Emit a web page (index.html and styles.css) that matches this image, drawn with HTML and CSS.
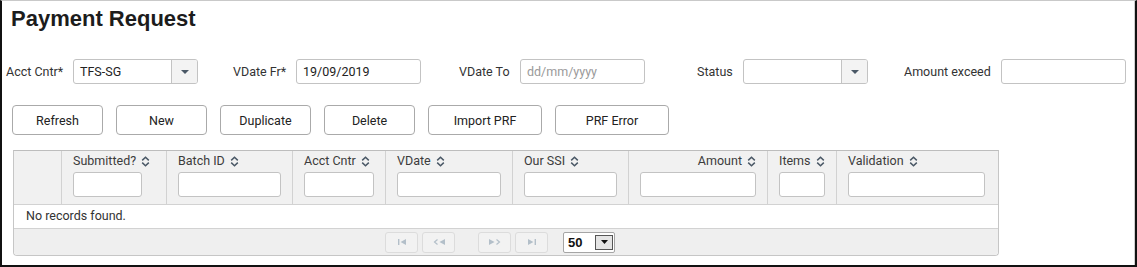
FILE: index.html
```html
<!DOCTYPE html>
<html lang="en">

<head>
  <meta charset="UTF-8" />
  <title>Payment Request</title>
  <link rel="stylesheet" href="styles.css">
</head>

<body>
  <div class="frame">
    <h1 class="page-title">Payment Request</h1>

    <!-- filter row -->
    <div class="filters">
      <label class="lbl lbl-acct">Acct Cntr*</label>
      <div class="dropdown">
        <span class="dd-value">TFS-SG</span>
        <span class="dd-trigger"><svg width="8" height="4" viewBox="0 0 8 4"><polygon points="0,0 8,0 4,4" /></svg></span>
      </div>

      <label class="lbl lbl-from">VDate Fr*</label>
      <input class="field" type="text" value="19/09/2019" />

      <label class="lbl lbl-to">VDate To</label>
      <input class="field" type="text" placeholder="dd/mm/yyyy" />

      <label class="lbl lbl-status">Status</label>
      <div class="dropdown">
        <span class="dd-value"></span>
        <span class="dd-trigger"><svg width="8" height="4" viewBox="0 0 8 4"><polygon points="0,0 8,0 4,4" /></svg></span>
      </div>

      <label class="lbl lbl-amount">Amount exceed</label>
      <input class="field" type="text" />
    </div>

    <!-- actions -->
    <div class="toolbar">
      <button class="btn">Refresh</button>
      <button class="btn">New</button>
      <button class="btn">Duplicate</button>
      <button class="btn">Delete</button>
      <button class="btn btn-wide">Import PRF</button>
      <button class="btn btn-wide">PRF Error</button>
    </div>

    <!-- results table -->
    <div class="datatable">
      <div class="dt-head">
        <div class="th"></div>
        <div class="th">
          <div class="th-label">Submitted? <svg class="sort" width="9" height="11" viewBox="0 0 9 11"><path d="M1.2 4.4L4.5 1.3L7.8 4.4M1.2 6.6L4.5 9.7L7.8 6.6" /></svg></div>
          <input class="filter-in in-narrow" type="text" />
        </div>
        <div class="th">
          <div class="th-label">Batch ID <svg class="sort" width="9" height="11" viewBox="0 0 9 11"><path d="M1.2 4.4L4.5 1.3L7.8 4.4M1.2 6.6L4.5 9.7L7.8 6.6" /></svg></div>
          <input class="filter-in" type="text" />
        </div>
        <div class="th">
          <div class="th-label">Acct Cntr <svg class="sort" width="9" height="11" viewBox="0 0 9 11"><path d="M1.2 4.4L4.5 1.3L7.8 4.4M1.2 6.6L4.5 9.7L7.8 6.6" /></svg></div>
          <input class="filter-in" type="text" />
        </div>
        <div class="th">
          <div class="th-label">VDate <svg class="sort" width="9" height="11" viewBox="0 0 9 11"><path d="M1.2 4.4L4.5 1.3L7.8 4.4M1.2 6.6L4.5 9.7L7.8 6.6" /></svg></div>
          <input class="filter-in" type="text" />
        </div>
        <div class="th">
          <div class="th-label">Our SSI <svg class="sort" width="9" height="11" viewBox="0 0 9 11"><path d="M1.2 4.4L4.5 1.3L7.8 4.4M1.2 6.6L4.5 9.7L7.8 6.6" /></svg></div>
          <input class="filter-in" type="text" />
        </div>
        <div class="th">
          <div class="th-label th-right">Amount <svg class="sort" width="9" height="11" viewBox="0 0 9 11"><path d="M1.2 4.4L4.5 1.3L7.8 4.4M1.2 6.6L4.5 9.7L7.8 6.6" /></svg></div>
          <input class="filter-in" type="text" />
        </div>
        <div class="th">
          <div class="th-label">Items <svg class="sort" width="9" height="11" viewBox="0 0 9 11"><path d="M1.2 4.4L4.5 1.3L7.8 4.4M1.2 6.6L4.5 9.7L7.8 6.6" /></svg></div>
          <input class="filter-in" type="text" />
        </div>
        <div class="th">
          <div class="th-label">Validation <svg class="sort" width="9" height="11" viewBox="0 0 9 11"><path d="M1.2 4.4L4.5 1.3L7.8 4.4M1.2 6.6L4.5 9.7L7.8 6.6" /></svg></div>
          <input class="filter-in" type="text" />
        </div>
      </div>

      <div class="dt-empty">No records found.</div>

      <div class="paginator">
        <span class="pg-btn"><svg width="8" height="6" viewBox="0 0 8 6"><rect x="0" y="0" width="1.4" height="6" /><polygon points="8,0 8,6 2.6,3" /></svg></span>
        <span class="pg-btn"><svg width="12" height="6" viewBox="0 0 12 6"><polyline points="4.5,0.5 1.5,3 4.5,5.5" /><polygon points="12,0 12,6 6.5,3" /></svg></span>
        <span class="pg-btn pg-next"><svg width="12" height="6" viewBox="0 0 12 6"><polygon points="0,0 0,6 5.5,3" /><polyline points="7.5,0.5 10.5,3 7.5,5.5" /></svg></span>
        <span class="pg-btn"><svg width="8" height="6" viewBox="0 0 8 6"><polygon points="0,0 0,6 5.4,3" /><rect x="6.6" y="0" width="1.4" height="6" /></svg></span>
        <span class="rows-select">
          <span class="rows-value">50</span>
          <span class="rows-trigger"><svg width="7" height="4" viewBox="0 0 7 4"><polygon points="0,0 7,0 3.5,4" /></svg></span>
        </span>
      </div>
    </div>
  </div>
</body>

</html>
```

FILE: styles.css
```css
/* Payment request screen */
:root {
  --text: #2b2b2b;
  --line: #c6c6c6;
  --line-soft: #d2d2d2;
  --head: #f1f1f1;
  --input-border: #c3c3c3;
  --icon: #4a5866;
}
* {
  box-sizing: border-box;
  margin: 0;
  padding: 0;
}
body {
  background: #fff;
  color: var(--text);
  font-family: Roboto, "Liberation Sans", sans-serif;
  font-size: 12.5px;
}
.frame {
  width: 1137px;
  height: 267px;
  border-top: 1px solid #c9c9c9;
  border-left: 2px solid #111;
  border-right: 2px solid #111;
  border-bottom: 2px solid #111;
  box-shadow: inset -1px 0 0 #cfcfcf;
}
.page-title {
  font-family: "Liberation Sans", Arial, sans-serif;
  font-size: 22px;
  line-height: 26px;
  font-weight: bold;
  color: #1c1c1c;
  margin: 5px 0 0 9px;
}
/* Filter row */
.filters {
  display: flex;
  align-items: center;
  margin-top: 27px;
  padding-left: 4px;
}
.lbl {
  flex: none;
  color: #333;
}
.lbl-acct { width: 67px; }
.lbl-from { width: 63px; margin-left: 35px; }
.lbl-to { width: 61px; margin-left: 38px; }
.lbl-status { width: 46px; margin-left: 52px; }
.lbl-amount { width: 97px; margin-left: 36px; }
.field,
.dropdown {
  flex: none;
  width: 125px;
  height: 25px;
  border: 1px solid var(--input-border);
  border-radius: 3px;
  background: #fff;
  font-family: inherit;
  font-size: 12.5px;
  color: #222;
}
.field {
  padding: 0 6px;
}
.field::placeholder {
  color: #9a9a9a;
}
.dropdown {
  display: flex;
  overflow: hidden;
}
.dd-value {
  flex: 1;
  padding-left: 6px;
  line-height: 23px;
}
.dd-trigger {
  width: 26px;
  display: flex;
  align-items: center;
  justify-content: center;
  background: #f3f3f3;
  border-left: 1px solid var(--input-border);
  fill: var(--icon);
}
.dd-trigger svg {
  margin-top: 1px;
}
/* Buttons */
.toolbar {
  display: flex;
  gap: 13px;
  margin-top: 21px;
  padding-left: 10px;
}
.btn {
  width: 91px;
  height: 30px;
  background: #fff;
  border: 1px solid #aaa;
  border-radius: 4px;
  font-family: inherit;
  font-size: 12.5px;
  color: #222;
}
.btn-wide {
  width: 114px;
}
/* Data table */
.datatable {
  width: 986px;
  margin: 15px 0 0 11px;
  border: 1px solid var(--line);
  border-top-color: #bdbdbd;
  border-radius: 0 0 4px 4px;
}
.dt-head {
  display: grid;
  grid-template-columns: 47px 105px 126px 93px 127px 116px 139px 69px 160px;
  background: var(--head);
  border-bottom: 1px solid var(--line-soft);
}
.th {
  padding: 3px 11px 7px 11px;
  border-left: 1px solid var(--line-soft);
}
.th:first-child {
  border-left: none;
}
.th-label {
  display: flex;
  align-items: center;
  gap: 5px;
  height: 14px;
  line-height: 14px;
  color: #3c3c3c;
  white-space: nowrap;
}
.th-right {
  justify-content: flex-end;
}
.sort {
  fill: none;
  stroke: var(--icon);
  stroke-width: 1.5;
  margin-top: 1px;
}
.filter-in {
  display: block;
  width: 100%;
  height: 25px;
  margin-top: 4px;
  border: 1px solid var(--input-border);
  border-radius: 3px;
  background: #fff;
}
.in-narrow {
  width: 69px;
}
.dt-empty {
  height: 24px;
  line-height: 21px;
  padding-left: 12px;
  background: #fff;
  border-bottom: 1px solid var(--line-soft);
  color: #333;
}
.paginator {
  display: flex;
  align-items: center;
  justify-content: center;
  height: 26px;
  padding-right: 12px;
  background: #efefef;
  border-radius: 0 0 4px 4px;
}
.pg-btn {
  width: 33px;
  height: 21px;
  margin-right: 4px;
  display: flex;
  align-items: center;
  justify-content: center;
  border: 1px solid #dcdcdc;
  border-radius: 3px;
  background: #f2f2f2;
  fill: #b3bfc9;
  stroke: #b3bfc9;
}
.pg-btn polyline {
  fill: none;
  stroke-width: 1.2;
}
.pg-btn rect,
.pg-btn polygon {
  stroke: none;
}
.pg-next {
  margin-left: 19px;
}
.rows-select {
  display: flex;
  align-items: center;
  width: 52px;
  height: 21px;
  margin-left: 11px;
  background: #fff;
  border: 1px solid #a5a5a5;
  border-radius: 2px;
}
.rows-value {
  flex: 1;
  padding-left: 4px;
  font-family: "Liberation Sans", Arial, sans-serif;
  font-weight: bold;
  font-size: 13px;
  color: #111;
}
.rows-trigger {
  width: 18px;
  height: 15px;
  margin-right: 1px;
  display: flex;
  align-items: center;
  justify-content: center;
  background: #e4e4e4;
  border: 1px solid #555;
  fill: #111;
}
```
